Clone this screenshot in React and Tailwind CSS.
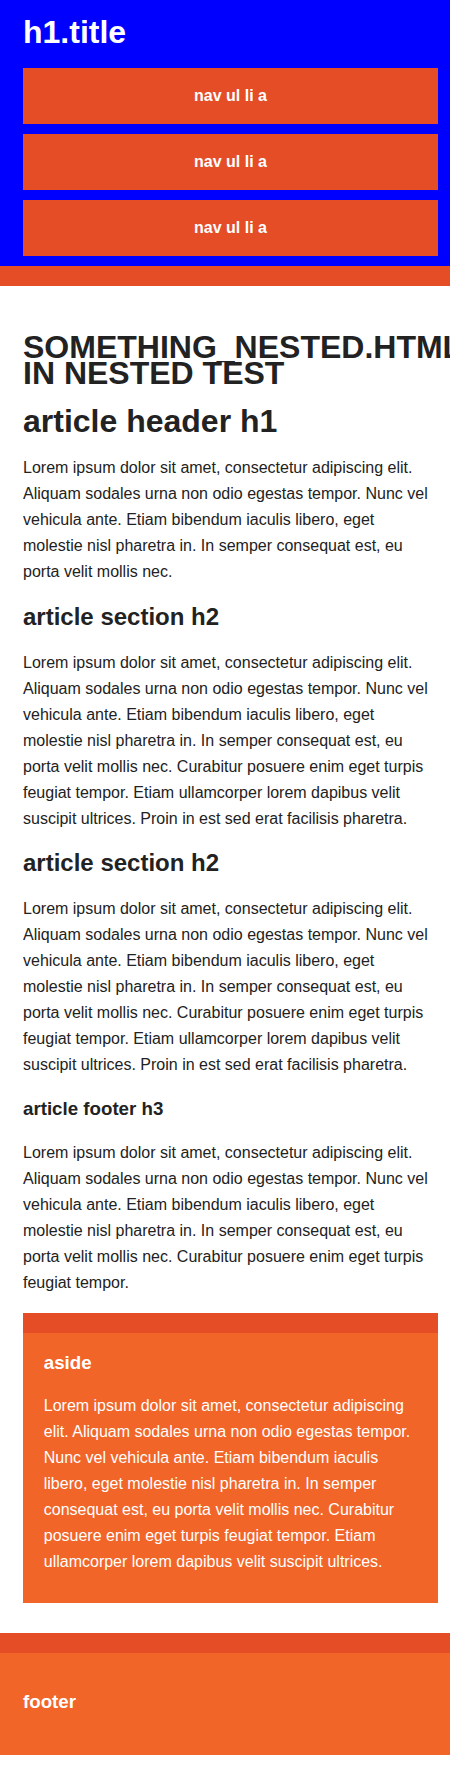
import React from 'react';

const lorem =
  'Lorem ipsum dolor sit amet, consectetur adipiscing elit. Aliquam sodales urna non odio egestas tempor. Nunc vel vehicula ante. Etiam bibendum iaculis libero, eget molestie nisl pharetra in. In semper consequat est, eu porta velit mollis nec.';
const loremLong =
  lorem +
  ' Curabitur posuere enim eget turpis feugiat tempor. Etiam ullamcorper lorem dapibus velit suscipit ultrices. Proin in est sed erat facilisis pharetra.';
const loremFooter = lorem + ' Curabitur posuere enim eget turpis feugiat tempor.';
const loremAside =
  'Lorem ipsum dolor sit amet, consectetur adipiscing elit. Aliquam sodales urna non odio egestas tempor. Nunc vel vehicula ante. Etiam bibendum iaculis libero, eget molestie nisl pharetra in. In semper consequat est, eu porta velit mollis nec. Curabitur posuere enim eget turpis feugiat tempor. Etiam ullamcorper lorem dapibus velit suscipit ultrices.';

const navItems = ['nav ul li a', 'nav ul li a', 'nav ul li a'];

const App = () => {
  return (
    <div className="min-h-[1781px] bg-white overflow-hidden text-[#222] font-['Liberation_Sans',Arial,sans-serif]">
      {/* Header */}
      <div className="bg-[#0000ff] border-b-[20px] border-[#e44d26]">
        <header className="ml-[23px] w-[415px] pt-[12px]">
          <h1 className="text-[32px] leading-[40px] font-bold text-white">h1.title</h1>
          <nav className="mt-[16px]">
            <ul>
              {navItems.map((item, idx) => (
                <li key={idx}>
                  <a
                    href="#"
                    className="block mb-[10px] py-[15px] bg-[#e44d26] text-center text-white font-bold text-[16px] leading-[26px]"
                  >
                    {item}
                  </a>
                </li>
              ))}
            </ul>
          </nav>
        </header>
      </div>

      {/* Main */}
      <div className="ml-[23px] w-[415px] pt-[30px] pb-[30px]">
        <article>
          <h1 className="mt-[18px] text-[32px] leading-[26px] font-bold whitespace-normal">
            SOMETHING_NESTED.HTML IN NESTED TEST
          </h1>
          <header>
            <h1 className="mt-[15px] text-[32px] leading-[40px] font-bold">article header h1</h1>
            <p className="mt-[14px] text-[16px] leading-[26px]">{lorem}</p>
          </header>
          <section>
            <h2 className="mt-[17px] text-[24px] leading-[30px] font-bold">article section h2</h2>
            <p className="mt-[18px] text-[16px] leading-[26px]">{loremLong}</p>
          </section>
          <section>
            <h2 className="mt-[16px] text-[24px] leading-[30px] font-bold">article section h2</h2>
            <p className="mt-[18px] text-[16px] leading-[26px]">{loremLong}</p>
          </section>
          <footer>
            <h3 className="mt-[19px] text-[18.72px] leading-[24px] font-bold">article footer h3</h3>
            <p className="mt-[19px] text-[16px] leading-[26px]">{loremFooter}</p>
          </footer>
        </article>

        {/* Aside */}
        <aside className="mt-[17px] bg-[#f16529] border-t-[20px] border-[#e44d26] px-[5%] pt-[18px] pb-[28px] text-white">
          <h3 className="text-[18.72px] leading-[24px] font-bold">aside</h3>
          <p className="mt-[18px] text-[16px] leading-[26px]">{loremAside}</p>
        </aside>
      </div>

      {/* Footer */}
      <div className="bg-[#f16529] border-t-[20px] border-[#e44d26]">
        <footer className="ml-[23px] w-[415px] pt-[37px] pb-[41px] text-white">
          <h3 className="text-[18.72px] leading-[24px] font-bold">footer</h3>
        </footer>
      </div>
    </div>
  );
};

export default App;
